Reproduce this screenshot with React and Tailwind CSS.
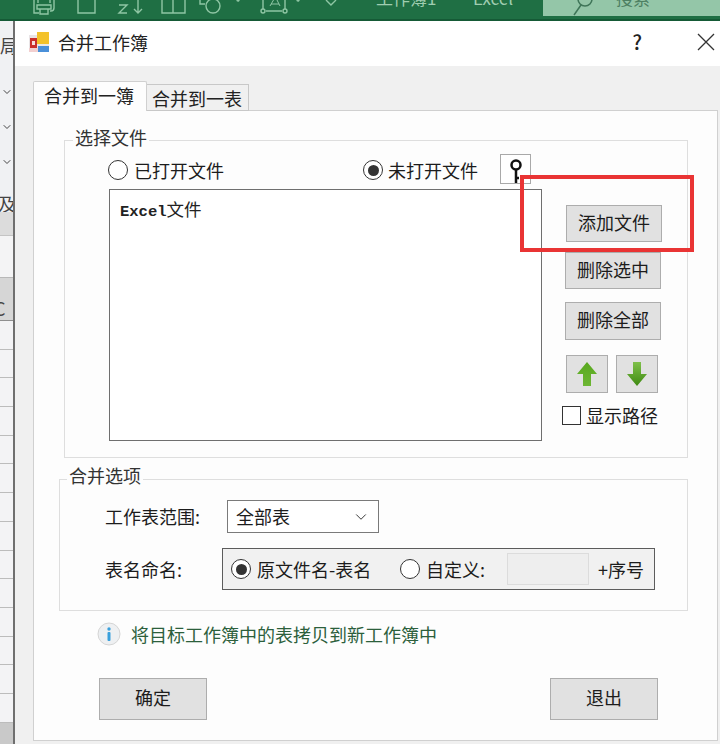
import { useId } from "react";
import { ChevronDown } from "lucide-react";

const cjk = { fontFamily: '"Noto Sans CJK SC", "Noto Sans", sans-serif' };

function RibbonIcons() {
  return (
    <svg width="360" height="19" viewBox="0 0 360 19" fill="none" stroke="#8fc6a4" strokeWidth="1.4" className="shrink-0">
      {/* printer */}
      <path d="M38 0v3M50 0v3M34 0v13h5M54 0v8a3 3 0 0 1-3 3h-1" />
      <path d="M37 5h14v4H37zM40 9h8v5h-8z" />
      {/* page */}
      <path d="M78 0v13h17V0" />
      {/* sort */}
      <path d="M119 5h8l-8 8h8M138 0v13M134 9l4 4 4-4" />
      {/* chart */}
      <path d="M162 0v13h23V0M173 0v13" />
      {/* shapes */}
      <path d="M200 0v4h5" />
      <circle cx="213" cy="6" r="7" />
      <circle cx="238" cy="0" r="1" fill="#8fc6a4" />
      {/* text box */}
      <path d="M263 0v9M285 0v9M266 11h16" />
      <circle cx="263" cy="11" r="2" />
      <circle cx="285" cy="11" r="2" />
      <path d="M270 6l3.500-6M280 6l-3-6M271 4h8" strokeWidth="1" />
      <circle cx="298" cy="0" r="1" fill="#8fc6a4" />
      <path d="M326 0l5 5 5-5" />
    </svg>
  );
}

function TopBar() {
  return (
    <div className="h-[21px] shrink-0 flex bg-[#1f6f44] border-b-[2px] border-[#155a36] overflow-hidden" style={cjk}>
      <RibbonIcons />
      <div className="h-[19px] overflow-hidden flex text-[#9fcdb0] text-[17px] leading-[20px]">
        <span className="ml-[16px] w-[97px] -mt-[12px] h-[20px]">工作簿1</span>
        <span className="w-[70px] -mt-[12px] h-[20px]">Excel</span>
      </div>
      <div className="w-[177px] h-[16px] bg-[#94c6a8] flex text-[#4d7f62] text-[17px] leading-[20px]">
        <svg width="30" height="16" viewBox="0 0 30 16" fill="none" stroke="#3f7558" strokeWidth="1.500" className="ml-[29px] shrink-0">
          <circle cx="13" cy="-1" r="7" />
          <path d="M9 5L2 15" />
        </svg>
        <span className="ml-[14px] -mt-[12px] h-[20px]">搜索</span>
      </div>
    </div>
  );
}

function SheetStrip() {
  const rows = Array.from({ length: 14 });
  return (
    <div className="w-[14px] shrink-0 flex flex-col bg-[#f0f1f3] overflow-hidden text-[#444]" style={cjk}>
      <div className="h-[191px] shrink-0 flex flex-col">
        <span className="mt-[13px] h-[22px] leading-[22px] text-[18px] whitespace-nowrap">局</span>
        <ChevronDown size={12} strokeWidth={2} className="mt-[30px] ml-[1px] shrink-0" />
        <ChevronDown size={12} strokeWidth={2} className="mt-[23px] ml-[1px] shrink-0" />
        <ChevronDown size={12} strokeWidth={2} className="mt-[23px] ml-[1px] shrink-0" />
        <span className="mt-[25px] h-[20px] leading-[20px] text-[18px] whitespace-nowrap -ml-[2px]">及</span>
      </div>
      <div className="h-[24px] shrink-0 bg-[#dcdcdc] border-b border-[#c4c4c4]" />
      <div className="h-[42px] shrink-0 bg-[#f4f4f5] border-b border-[#b8b8b8]" />
      <div className="h-[43px] shrink-0 bg-[#d6d6d6] border-b border-[#8f8f8f] text-[18px] leading-[60px] -ml-[6px]">C</div>
      {rows.map((_, i) => (
        <div key={i} className="h-[28.700px] shrink-0 bg-[#f3f3f5] border-b border-[#bcbcbc]" />
      ))}
      <div className="flex-1 bg-[#c9c9c9]" />
    </div>
  );
}

function Radio({ checked }) {
  return (
    <span className="w-[20px] h-[20px] shrink-0 rounded-full border-[1.500px] border-[#333] bg-white flex items-center justify-center">
      {checked && <span className="w-[11px] h-[11px] rounded-full bg-[#333]" />}
    </span>
  );
}

function GrayButton({ className, children }) {
  return (
    <div className={"flex items-center justify-center pb-[3px] bg-[#e1e1e1] border-[1.500px] border-[#adadad] text-[18px] text-[#1c1c1c] " + className}>
      {children}
    </div>
  );
}

function Arrow({ down }) {
  const id = useId();
  return (
    <GrayButton className="w-[42px] h-[38px] !pb-0">
      <svg width="22" height="26" viewBox="0 0 22 26">
        <defs>
          <linearGradient id={id} x1="0" y1="0" x2="0" y2="1">
            <stop offset="0" stopColor={down ? "#7fc04a" : "#58a81f"} />
            <stop offset="1" stopColor={down ? "#3f8a12" : "#6db634"} />
          </linearGradient>
        </defs>
        <path
          d={down ? "M7 1h8v12h6L11 25 1 13h6z" : "M11 1l10 12h-6v12H7V13H1z"}
          fill={`url(#${id})`}
        />
      </svg>
    </GrayButton>
  );
}

function Legend({ className, children }) {
  return (
    <span className={"absolute bg-[#fdfdfd] px-[2px] text-[18px] leading-[26px] text-[#333] " + className}>
      {children}
    </span>
  );
}

function FilePicker() {
  return (
    <div className="relative ml-[30px] mt-[29px] w-[624px] h-[318px] shrink-0 border-[1.500px] border-[#dedede] flex pl-[44px]">
      <Legend className="left-[8px] -top-[17px]">选择文件</Legend>

      <div className="w-[433px] shrink-0 flex flex-col">
        <div className="h-[48px] shrink-0 pt-[13px] flex items-start">
          <div className="flex items-center h-[30px] gap-[6px] -ml-[1px] mt-[1px]">
            <Radio />
            <span className="text-[18px] text-[#1c1c1c]">已打开文件</span>
          </div>
          <div className="flex items-center h-[30px] gap-[5px] ml-[139px] mt-[1px]">
            <Radio checked />
            <span className="text-[18px] text-[#1c1c1c]">未打开文件</span>
          </div>
          <div className="ml-[22px] w-[31px] h-[30px] shrink-0 border border-[#a9a9a9] bg-white flex justify-center pt-[4px]">
            <svg width="14" height="24" viewBox="0 0 14 24" fill="none" stroke="#111" strokeWidth="2.500" className="shrink-0">
              <circle cx="7" cy="6" r="4.500" />
              <path d="M7 10v14M7 19h3" />
            </svg>
          </div>
        </div>
        <div className="h-[252px] shrink-0 bg-white border-[1.500px] border-[#6f6f6f] pl-[10px] pt-[4px] text-[#222] leading-[30px]">
          <span className="text-[15.500px] font-bold" style={{ fontFamily: '"Liberation Mono", monospace' }}>Excel</span>
          <span className="text-[17.500px]">文件</span>
        </div>
      </div>

      <div className="ml-[23px] pt-[64px] flex flex-col items-start">
        <GrayButton className="w-[96px] h-[37px] ml-[1px]">添加文件</GrayButton>
        <GrayButton className="w-[96px] h-[37px] mt-[10px]">删除选中</GrayButton>
        <GrayButton className="w-[96px] h-[38px] mt-[13px]">删除全部</GrayButton>
        <div className="flex gap-[8px] mt-[15px] ml-[1px]">
          <Arrow />
          <Arrow down />
        </div>
        <div className="flex items-center gap-[5px] mt-[12px] -ml-[3px]">
          <span className="w-[19px] h-[19px] border-[1.500px] border-[#333] bg-white shrink-0" />
          <span className="text-[18px] leading-[20px] text-[#1c1c1c]">显示路径</span>
        </div>
      </div>

      {/* red callout over the add button */}
      <div className="absolute left-[455px] top-[34px] w-[174px] h-[77px] border-[4px] border-[#e93434]" />
    </div>
  );
}

function MergeOptions() {
  return (
    <div className="relative ml-[25px] mt-[21px] w-[629px] h-[132px] shrink-0 border-[1.500px] border-[#dedede] pl-[45px] text-[18px] text-[#1c1c1c]">
      <Legend className="left-[7px] -top-[18px]">合并选项</Legend>

      <div className="flex items-center mt-[20px] h-[33px]">
        <span className="w-[122px] shrink-0">工作表范围:</span>
        <div className="w-[152px] h-[33px] shrink-0 bg-white border-[1.500px] border-[#7a7a7a] pl-[8px] pr-[8px] flex items-center justify-between">
          <span>全部表</span>
          <ChevronDown size={18} strokeWidth={1.300} className="text-[#333]" />
        </div>
      </div>

      <div className="flex items-center mt-[15px] h-[42px]">
        <span className="w-[117px] shrink-0">表名命名:</span>
        <div className="w-[433px] h-[42px] shrink-0 bg-[#f1f1f1] border-[1.500px] border-[#5c5c5c] flex items-center pl-[8px]">
          <Radio checked />
          <span className="ml-[6px] w-[143px] shrink-0 whitespace-nowrap">原文件名-表名</span>
          <Radio />
          <span className="ml-[6px] w-[81px] shrink-0">自定义:</span>
          <div className="w-[82px] h-[32px] shrink-0 bg-[#eeeeee] border border-[#dcdcdc]" />
          <span className="ml-[9px]">+序号</span>
        </div>
      </div>
    </div>
  );
}

function InfoIcon() {
  return (
    <svg width="24" height="24" viewBox="0 0 24 24" className="shrink-0">
      <circle cx="12" cy="12" r="11" fill="#eef0f2" stroke="#d5d5d5" />
      <circle cx="12" cy="7" r="1.700" fill="#3aa0dc" />
      <rect x="10.500" y="10" width="3" height="9" rx="1" fill="#3aa0dc" />
    </svg>
  );
}

export default function App() {
  return (
    <div className="w-[720px] h-[744px] flex flex-col overflow-hidden bg-white" style={cjk}>
      <TopBar />
      <div className="flex-1 flex min-h-0">
        <SheetStrip />

        <div className="flex-1 flex flex-col border-l-[2px] border-[#6f6f6f] -ml-[1px]">
          {/* title bar */}
          <div className="h-[45px] shrink-0 bg-white flex items-center pb-[3px] pl-[14px] text-[#222]">
            <svg width="20" height="20" viewBox="0 0 20 20" className="shrink-0">
              <rect x="0" y="3" width="9" height="17" fill="#e9e4e6" />
              <rect x="0" y="16" width="9" height="4" fill="#f2cfcf" />
              <rect x="9" y="0" width="11" height="20" fill="#ece9e4" />
              <rect x="1" y="6" width="7" height="10" fill="#c9302c" />
              <rect x="3" y="9" width="3" height="4" fill="#f5dede" />
              <rect x="8" y="0" width="12" height="12" fill="#f3c22b" />
              <rect x="9" y="14" width="11" height="6" fill="#4a90d9" />
            </svg>
            <span className="ml-[9px] text-[18px]">合并工作簿</span>
            <span className="ml-auto text-[20px] font-medium">?</span>
            <svg width="18" height="18" viewBox="0 0 18 18" fill="none" stroke="#333" strokeWidth="1.300" className="ml-[55px] mr-[5px] shrink-0">
              <path d="M1 1l16 16M17 1L1 17" />
            </svg>
          </div>

          {/* body */}
          <div className="flex-1 flex flex-col min-h-0 bg-[#f0f0f0] pl-[18px] pr-[2px] pb-[3px] pt-[15px]">
            <div className="h-[30px] shrink-0 flex items-end -mb-[1px] relative text-[18px] text-[#222]">
              <div className="w-[114px] h-[30px] bg-[#fdfdfd] border border-b-0 border-[#d0d0d0] rounded-t-[2px] pl-[10px] leading-[26px] z-10">合并到一簿</div>
              <div className="w-[102px] h-[27px] bg-[#f0f0f0] border border-l-0 border-[#c8c8c8] pl-[5px] leading-[26px]">合并到一表</div>
            </div>
            <div className="flex-1 flex flex-col bg-[#fdfdfd] border border-[#d0d0d0]">
              <FilePicker />
              <MergeOptions />

              <div className="flex items-center mt-[10px] ml-[63px] h-[26px]">
                <InfoIcon />
                <span className="ml-[10px] text-[18px] text-[#2c5f3c]">将目标工作簿中的表拷贝到新工作簿中</span>
              </div>

              <div className="flex justify-between mt-[31px] ml-[65px] w-[559px]">
                <GrayButton className="w-[108px] h-[42px]">确定</GrayButton>
                <GrayButton className="w-[108px] h-[42px]">退出</GrayButton>
              </div>
            </div>
          </div>
        </div>
      </div>
    </div>
  );
}
